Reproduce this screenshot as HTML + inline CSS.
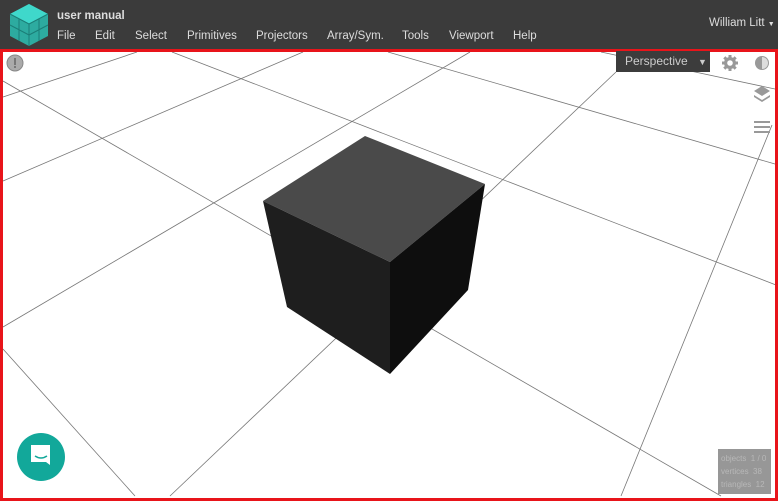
<!DOCTYPE html>
<html><head><meta charset="utf-8"><style>
html,body{margin:0;padding:0;width:778px;height:501px;overflow:hidden;background:#fff;font-family:"Liberation Sans",sans-serif}
#hdr{position:absolute;left:0;top:0;width:778px;height:49px;background:#3b3b3b}
.t{position:absolute;color:#ddd;font-size:11.5px}
#vp{position:absolute;left:0;top:49px;width:772px;height:446px;border:3px solid #e8141a}
#persp{position:absolute;left:616px;top:51px;width:94px;height:21px;background:#3c3c3c;color:#ccc;font-size:12px;line-height:21px;box-sizing:border-box;padding-left:9px}
#stats{position:absolute;left:718px;top:449px;width:53px;height:45px;background:#979797;color:#b8b8b8;font-size:8px;line-height:13px;padding:3px 0 0 3px;box-sizing:border-box}
</style></head><body>
<svg width="778" height="501" style="position:absolute;left:0;top:0">
<g stroke="#777" stroke-width="0.8" fill="none">
<line x1="3" y1="97" x2="137" y2="52"/>
<line x1="3" y1="81" x2="721" y2="496"/>
<line x1="3" y1="181" x2="303" y2="52"/>
<line x1="172" y1="52" x2="776" y2="285"/>
<line x1="470" y1="52" x2="3" y2="327"/>
<line x1="388" y1="52" x2="775" y2="164"/>
<line x1="601" y1="52" x2="775" y2="89"/>
<line x1="616" y1="72" x2="170" y2="496"/>
<line x1="772" y1="125" x2="621" y2="496"/>
<line x1="3" y1="349" x2="135" y2="496"/>
</g>
<polygon points="365,136 485,184 390,262 263,201" fill="#4a4a4a"/>
<polygon points="263,201 390,262 390,374 287,307" fill="#1e1e1e"/>
<polygon points="390,262 485,184 468,290 390,374" fill="#0e0e0e"/>
<circle cx="15" cy="63" r="8" fill="#aaa" stroke="#888"/>
<rect x="14" y="58" width="2" height="7" fill="#777"/><rect x="14" y="66" width="2" height="2" fill="#777"/>
<circle cx="41" cy="457" r="24" fill="#12a89a"/>
<path d="M31 445h19v20l-4-3h-15z" fill="#fff"/>
<path d="M35 456q6 4 12 0" stroke="#12a89a" stroke-width="1.5" fill="none"/>
<g fill="#999">
<g transform="translate(730 63)">
<circle r="6"/>
<g stroke="#999" stroke-width="3"><line x1="0" y1="-8" x2="0" y2="8"/><line x1="-8" y1="0" x2="8" y2="0"/><line x1="-5.7" y1="-5.7" x2="5.7" y2="5.7"/><line x1="-5.7" y1="5.7" x2="5.7" y2="-5.7"/></g>
<circle r="2.8" fill="#fff"/>
</g>
<circle cx="762" cy="63" r="7"/><path d="M762 57a6 6 0 0 1 0 12z" fill="#ddd"/>
<path d="M762 86l8 5-8 5-8-5z"/><path d="M754 95l8 5 8-5v2l-8 5-8-5z"/>
<rect x="754" y="121" width="16" height="2"/><rect x="754" y="126" width="16" height="2"/><rect x="754" y="131" width="16" height="2"/>
</g>
</svg>
<div id="vp"></div>
<div id="hdr">
<svg width="46" height="46" style="position:absolute;left:6px;top:2px">
<polygon points="23,2 42,12 42,34 23,44 4,34 4,12" fill="#2bbfb3" opacity="0.85"/>
<polygon points="23,2 42,12 23,22 4,12" fill="#3fd8cb"/>
<g stroke="#1b7e77" stroke-width="1" fill="none"><path d="M4 12l19 10 19-10M23 22v22M13 17v22M33 17v22M4 23l19 10 19-10"/></g>
</svg>
<div class="t" style="left:57px;top:10px;font-weight:bold">user manual</div>
<div class="t" style="left:57px;top:30px">File</div>
<div class="t" style="left:95px;top:30px">Edit</div>
<div class="t" style="left:135px;top:30px">Select</div>
<div class="t" style="left:187px;top:30px">Primitives</div>
<div class="t" style="left:256px;top:30px">Projectors</div>
<div class="t" style="left:327px;top:30px">Array/Sym.</div>
<div class="t" style="left:402px;top:30px">Tools</div>
<div class="t" style="left:449px;top:30px">Viewport</div>
<div class="t" style="left:513px;top:30px">Help</div>
<div class="t" style="left:709px;top:17px">William Litt <span style="font-size:7px">▼</span></div>
</div>
<div id="persp">Perspective <span style="font-size:9px;margin-left:7px">▼</span></div>
<div id="stats">objects&nbsp; 1 / 0<br>vertices&nbsp; 38<br>triangles&nbsp; 12</div>
</body></html>
